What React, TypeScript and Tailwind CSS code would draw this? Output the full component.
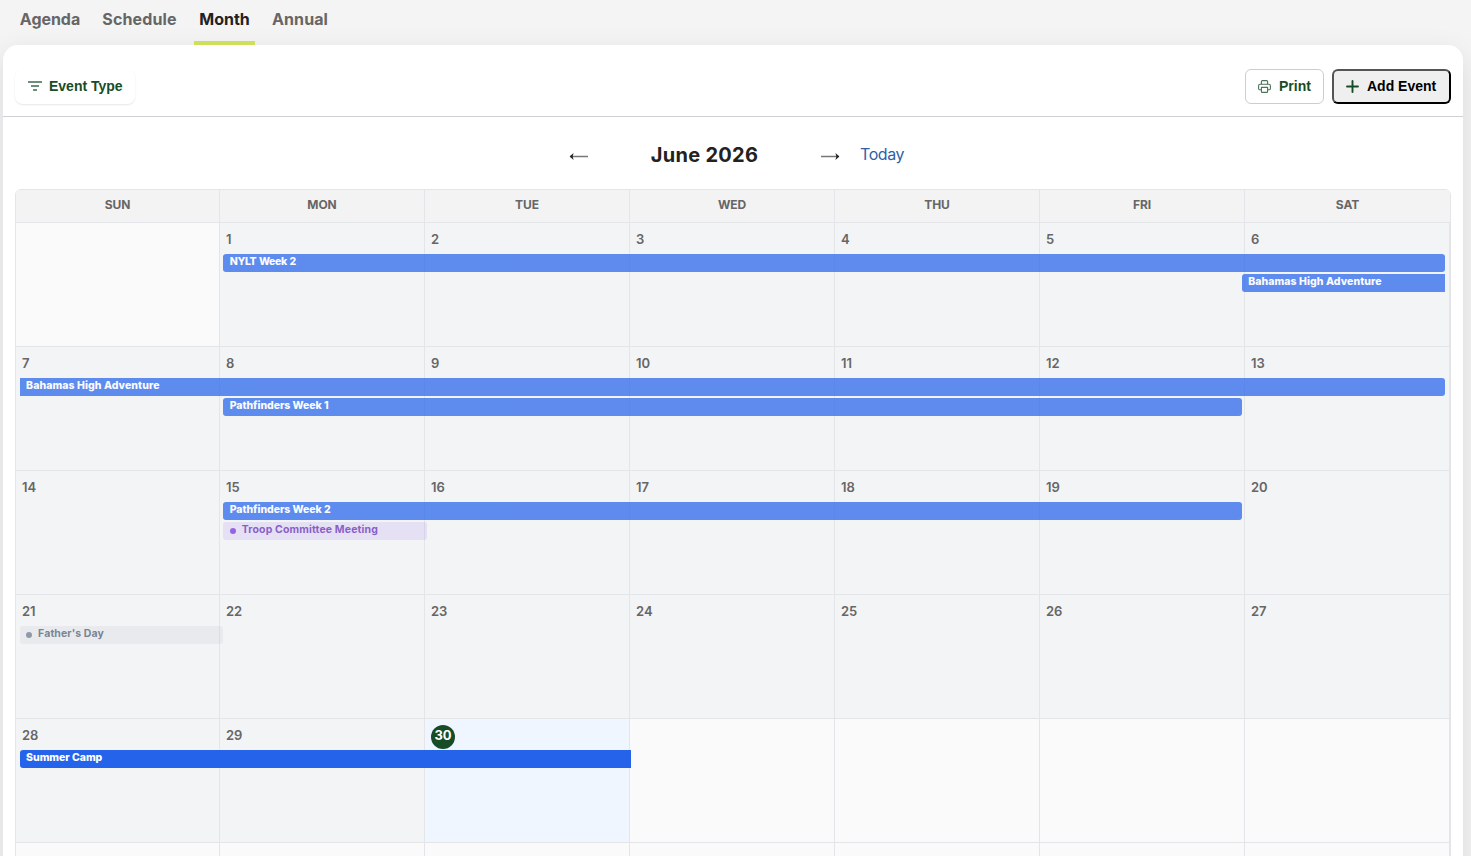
import React, { useState } from "react";
import clsx from "clsx";

type CalendarEvent = {
    title: string;
    bar: string;
    text: string;
    dot?: string;
};

type Week = {
    days: (number | null)[];
    events: CalendarEvent[];
};

const TODAY = 30;

const tabs = [
    { name: "Agenda", width: "w-[70px]", tracking: "tracking-[-0.05px]" },
    { name: "Schedule", width: "w-[85px]", tracking: "tracking-[0.15px]" },
    { name: "Month", width: "w-[61px]", tracking: "tracking-normal" },
    { name: "Annual", width: "w-[66px]", tracking: "tracking-[0.1px]" },
];

const weekdays = ["SUN", "MON", "TUE", "WED", "THU", "FRI", "SAT"];

const pastBlue = "bg-[#2563eb] opacity-[0.72]";

const weeks: Week[] = [
    {
        days: [null, 1, 2, 3, 4, 5, 6],
        events: [
            {
                title: "NYLT Week 2",
                bar: `col-start-2 col-span-6 rounded-[3px] ${pastBlue}`,
                text: "text-white font-extrabold tracking-[-0.4px] [word-spacing:0.8px]",
            },
            {
                title: "Bahamas High Adventure",
                bar: `col-start-7 col-span-1 rounded-l-[3px] ${pastBlue}`,
                text: "text-white font-extrabold tracking-[0.08px]",
            },
        ],
    },
    {
        days: [7, 8, 9, 10, 11, 12, 13],
        events: [
            {
                title: "Bahamas High Adventure",
                bar: `col-start-1 col-span-7 rounded-r-[3px] ${pastBlue}`,
                text: "text-white font-extrabold tracking-[0.08px]",
            },
            {
                title: "Pathfinders Week 1",
                bar: `col-start-2 col-span-5 rounded-[3px] ${pastBlue}`,
                text: "text-white font-extrabold tracking-[-0.05px]",
            },
        ],
    },
    {
        days: [14, 15, 16, 17, 18, 19, 20],
        events: [
            {
                title: "Pathfinders Week 2",
                bar: `col-start-2 col-span-5 rounded-[3px] ${pastBlue}`,
                text: "text-white font-extrabold tracking-[-0.05px]",
            },
            {
                title: "Troop Committee Meeting",
                bar: "col-start-2 col-span-1 rounded-[3px] bg-[#7c3aed]/15 opacity-70",
                text: "text-[#5b21b6] font-bold tracking-[0.14px]",
                dot: "bg-[#6d28d9]",
            },
        ],
    },
    {
        days: [21, 22, 23, 24, 25, 26, 27],
        events: [
            {
                title: "Father's Day",
                bar: "col-start-1 col-span-1 rounded-[3px] bg-[#64748b]/10 opacity-70",
                text: "text-[#475569] font-bold tracking-[0.1px]",
                dot: "bg-[#64748b]",
            },
        ],
    },
    {
        days: [28, 29, 30, null, null, null, null],
        events: [
            {
                title: "Summer Camp",
                bar: "col-start-1 col-span-3 rounded-l-[3px] bg-[#2563eb]",
                text: "text-white font-extrabold tracking-[-0.03px]",
            },
        ],
    },
    { days: [null, null, null, null, null, null, null], events: [] },
];

const FilterIcon = () => (
    <svg width="14" height="10" viewBox="0 0 14 10" fill="none" stroke="#6b8f78" strokeWidth="2" className="-mt-[1px]">
        <path d="M0 1h14M3 5h8M5 9h4" />
    </svg>
);

const PrintIcon = () => (
    <svg width="13" height="13" viewBox="0 0 13 13" fill="none" stroke="#4a7359" strokeWidth="1.1" strokeLinejoin="round">
        <path d="M3.4 4.2V1.6a1 1 0 0 1 1-1h4.2a1 1 0 0 1 1 1v2.6" />
        <path d="M3.4 9.8H2a1.4 1.4 0 0 1-1.4-1.4V5.7A1.5 1.5 0 0 1 2.1 4.2h8.8a1.5 1.5 0 0 1 1.5 1.5v2.7A1.4 1.4 0 0 1 11 9.8H9.6" />
        <path d="M3.4 7.4h6.2v4a1 1 0 0 1-1 1H4.4a1 1 0 0 1-1-1z" />
    </svg>
);

const PlusIcon = () => (
    <svg width="13" height="13" viewBox="0 0 13 13" stroke="#174c28" strokeWidth="1.9" strokeLinecap="round">
        <path d="M6.5 1v11M1 6.5h11" />
    </svg>
);

const ArrowIcon = ({ className }: { className?: string }) => (
    <svg width="20" height="9" viewBox="0 0 20 9" className={className}>
        <path d="M1.5 4.5H19" stroke="#777" strokeWidth="1.5" />
        <path d="M.6 4.5 4.6 1 3.6 4.5 4.6 8z" fill="#222" />
    </svg>
);

const DayCell = ({ day }: { day: number | null }) => (
    <div
        className={clsx(
            "border-r border-b border-[#e4e5e8] pl-[5px] pt-1.5",
            day === null ? "bg-[#fafafa]" : day === TODAY ? "bg-[#eff6ff]" : "bg-[#f3f4f6]"
        )}
    >
        {day !== null && (
            <span
                className={clsx(
                    "flex h-6 items-center pb-[3px] text-[13px]",
                    day === TODAY
                        ? "ml-[1px] w-6 justify-center rounded-full bg-[#174c28] font-bold text-white"
                        : "pl-[1px] font-semibold text-[#666]"
                )}
            >
                {day}
            </span>
        )}
    </div>
);

const EventBar = ({ event }: { event: CalendarEvent }) => (
    <div className={clsx("flex h-[18px] items-center pb-[1px] pl-[6.5px] text-[10.5px] leading-none", event.bar)}>
        {event.dot && <span className={clsx("mr-1.5 mt-[1px] h-1.5 w-1.5 rounded-full", event.dot)} />}
        <span className={clsx("whitespace-nowrap pb-[1px]", event.text)}>{event.title}</span>
    </div>
);

const WeekRow = ({ week }: { week: Week }) => (
    <div className="relative grid h-[124px] shrink-0 grid-cols-[204px_repeat(6,205px)]">
        {week.days.map((day, i) => (
            <DayCell key={i} day={day} />
        ))}
        {/* Events sit on their own grid over the day cells */}
        <div className="absolute left-[3.6px] top-[31px] grid w-[1425.8px] grid-cols-7 gap-y-0.5">
            {week.events.map((event) => (
                <EventBar key={event.title} event={event} />
            ))}
        </div>
    </div>
);

const App = () => {
    const [currentTab, setCurrentTab] = useState("Month");

    return (
        <div className="h-[856px] w-[1471px] overflow-hidden bg-[#f4f4f4] font-['Inter',sans-serif]">
            <nav className="flex h-[45px] gap-3 pl-[15px]">
                {tabs.map((tab) => (
                    <button
                        key={tab.name}
                        onClick={() => setCurrentTab(tab.name)}
                        className={clsx(
                            "relative z-10 flex justify-center border-b-4 pt-[7px] text-base font-bold",
                            tab.width,
                            tab.tracking,
                            currentTab === tab.name ? "border-[#cfdf5c] text-[#222]" : "border-transparent text-[#666]"
                        )}
                    >
                        {tab.name}
                    </button>
                ))}
            </nav>

            <main className="ml-[3px] flex h-[860px] w-[1460px] flex-col rounded-[15px] bg-white shadow-[0_10px_30px_rgba(0,0,0,0.11)]">
                {/* Toolbar */}
                <div className="flex h-[72px] shrink-0 items-center justify-between border-b border-[#ced2d7] pl-3 pr-3 pt-3 font-['Liberation_Sans',Arial,sans-serif] text-sm font-bold">
                    <button className="flex h-[35px] w-[120px] items-center gap-[7px] rounded-lg pl-[13px] text-[#174c28] shadow-[0_1px_2px_rgba(0,0,0,0.1)]">
                        <FilterIcon />
                        <span className="pb-0.5">Event Type</span>
                    </button>
                    <div className="flex gap-2">
                        <button className="flex h-[35px] w-[79px] items-center gap-2 rounded-md border border-[#c5d2ca] pl-3 text-[#174c28]">
                            <PrintIcon />
                            <span className="pb-0.5">Print</span>
                        </button>
                        <button className="flex h-[35px] w-[119px] items-center gap-2 rounded-md border-2 border-black bg-[#efefef] pl-3 text-black [border-style:outset]">
                            <PlusIcon />
                            <span className="pb-0.5">Add Event</span>
                        </button>
                    </div>
                </div>

                {/* Month navigation */}
                <div className="flex h-[72px] shrink-0 items-center pl-[566px] pt-1">
                    <ArrowIcon className="mt-[3px]" />
                    <h1 className="w-[231px] pb-[1px] text-center text-xl font-bold tracking-[0.3px] text-[#222]">June 2026</h1>
                    <ArrowIcon className="mt-[3px] rotate-180" />
                    <a className="ml-5 pb-[2px] text-base tracking-[-0.4px] text-[#2f5fa8]">Today</a>
                </div>

                {/* Month grid */}
                <div className="mx-3 flex w-[1436px] flex-col overflow-hidden rounded-t-md border border-[#e4e5e8]">
                    <div className="grid h-[33px] shrink-0 grid-cols-[204px_repeat(6,205px)] bg-[#f3f3f3]">
                        {weekdays.map((weekday) => (
                            <div
                                key={weekday}
                                className="flex items-center justify-center border-r border-b border-[#e4e5e8] pb-[3px] text-xs font-bold tracking-[-0.1px] text-[#666] last:border-r-0"
                            >
                                {weekday}
                            </div>
                        ))}
                    </div>
                    {weeks.map((week, i) => (
                        <WeekRow key={i} week={week} />
                    ))}
                </div>
            </main>
        </div>
    );
};

export default App;
